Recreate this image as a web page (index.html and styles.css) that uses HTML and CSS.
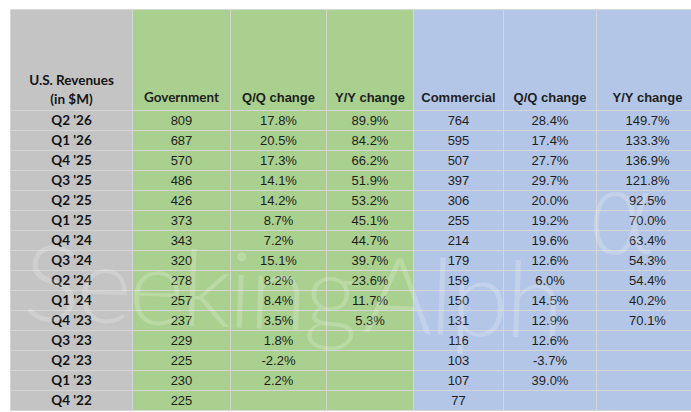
FILE: index.html
```
<!DOCTYPE html>
<html>
<head>
<meta charset="utf-8">
<link rel="stylesheet" href="styles.css">
</head>
<body>
<div class="sheet">
<table class="rev">
<colgroup>
<col class="c-q"><col class="c-gov"><col class="c-gqq"><col class="c-gyy"><col class="c-com"><col class="c-cqq"><col class="c-cyy">
</colgroup>
<thead>
<tr>
<th class="lbl">U.S. Revenues<br>(in $M)</th>
<th class="g cal">Government</th>
<th class="g">Q/Q change</th>
<th class="g">Y/Y change</th>
<th class="b">Commercial</th>
<th class="b">Q/Q change</th>
<th class="b">Y/Y change</th>
</tr>
</thead>
<tbody>
<tr><td class="lbl">Q2 '26</td><td class="g">809</td><td class="g">17.8%</td><td class="g">89.9%</td><td class="b">764</td><td class="b">28.4%</td><td class="b">149.7%</td></tr>
<tr><td class="lbl">Q1 '26</td><td class="g">687</td><td class="g">20.5%</td><td class="g">84.2%</td><td class="b">595</td><td class="b">17.4%</td><td class="b">133.3%</td></tr>
<tr><td class="lbl">Q4 '25</td><td class="g">570</td><td class="g">17.3%</td><td class="g">66.2%</td><td class="b">507</td><td class="b">27.7%</td><td class="b">136.9%</td></tr>
<tr><td class="lbl">Q3 '25</td><td class="g">486</td><td class="g">14.1%</td><td class="g">51.9%</td><td class="b">397</td><td class="b">29.7%</td><td class="b">121.8%</td></tr>
<tr><td class="lbl">Q2 '25</td><td class="g">426</td><td class="g">14.2%</td><td class="g">53.2%</td><td class="b">306</td><td class="b">20.0%</td><td class="b">92.5%</td></tr>
<tr><td class="lbl">Q1 '25</td><td class="g">373</td><td class="g">8.7%</td><td class="g">45.1%</td><td class="b">255</td><td class="b">19.2%</td><td class="b">70.0%</td></tr>
<tr><td class="lbl">Q4 '24</td><td class="g">343</td><td class="g">7.2%</td><td class="g">44.7%</td><td class="b">214</td><td class="b">19.6%</td><td class="b">63.4%</td></tr>
<tr><td class="lbl">Q3 '24</td><td class="g">320</td><td class="g">15.1%</td><td class="g">39.7%</td><td class="b">179</td><td class="b">12.6%</td><td class="b">54.3%</td></tr>
<tr><td class="lbl">Q2 '24</td><td class="g">278</td><td class="g">8.2%</td><td class="g">23.6%</td><td class="b">159</td><td class="b">6.0%</td><td class="b">54.4%</td></tr>
<tr><td class="lbl">Q1 '24</td><td class="g">257</td><td class="g">8.4%</td><td class="g">11.7%</td><td class="b">150</td><td class="b">14.5%</td><td class="b">40.2%</td></tr>
<tr><td class="lbl">Q4 '23</td><td class="g">237</td><td class="g">3.5%</td><td class="g">5.3%</td><td class="b">131</td><td class="b">12.9%</td><td class="b">70.1%</td></tr>
<tr><td class="lbl">Q3 '23</td><td class="g">229</td><td class="g">1.8%</td><td class="g"></td><td class="b">116</td><td class="b">12.6%</td><td class="b"></td></tr>
<tr><td class="lbl">Q2 '23</td><td class="g">225</td><td class="g">-2.2%</td><td class="g"></td><td class="b">103</td><td class="b">-3.7%</td><td class="b"></td></tr>
<tr><td class="lbl">Q1 '23</td><td class="g">230</td><td class="g">2.2%</td><td class="g"></td><td class="b">107</td><td class="b">39.0%</td><td class="b"></td></tr>
<tr><td class="lbl">Q4 '22</td><td class="g">225</td><td class="g"></td><td class="g"></td><td class="b">77</td><td class="b"></td><td class="b"></td></tr>
</tbody>
</table>
<div class="watermark" aria-hidden="true">Seeking Alph</div>
<div class="wm-alpha" aria-hidden="true">α</div>
</div>
</body>
</html>
```
FILE: styles.css
```
html, body {
  margin: 0;
  padding: 0;
  background: #ffffff;
  overflow: hidden;
}
body {
  width: 691px;
  height: 412px;
}
.sheet {
  position: relative;
  padding: 9px 0 0 10px;
  width: 681px;
  height: 403px;
  overflow: hidden;
}
.rev {
  border-collapse: collapse;
  table-layout: fixed;
  width: 688px;
  font-family: "Liberation Sans", Arial, sans-serif;
  font-size: 13px;
  color: #1e1e1e;
}
.c-q { width: 122px; }
.c-gov { width: 98px; }
.c-gqq { width: 96px; }
.c-gyy { width: 87px; }
.c-com { width: 90px; }
.c-cqq { width: 93px; }
.c-cyy { width: 102px; }
.rev th, .rev td {
  border: 1px solid #d6d6d6;
  padding: 0;
  text-align: center;
  white-space: nowrap;
}
.rev thead th {
  height: 97px;
  vertical-align: bottom;
  padding-bottom: 3px;
  font-weight: bold;
  line-height: 19px;
}
.rev tbody td {
  height: 19px;
  line-height: 19px;
}
.lbl {
  background: #c4c4c4;
  font-family: "Lato", "Open Sans", sans-serif;
  font-weight: bold;
  font-size: 13.5px;
  color: #141414;
}
.cal {
  font-family: "Lato", "Open Sans", sans-serif;
  font-size: 13.5px;
}
.g { background: #a9d08e; }
.b { background: #b4c6e7; }
.rev thead .lbl {
  padding-bottom: 1px;
}
.watermark {
  position: absolute;
  left: 22px;
  top: 226px;
  font-family: "Lato", "Open Sans", sans-serif;
  font-weight: 300;
  font-size: 106px;
  letter-spacing: -3px;
  word-spacing: -14px;
  line-height: 1;
  color: rgba(255, 255, 255, 0.2);
  white-space: nowrap;
  pointer-events: none;
  transform: rotate(2deg);
  transform-origin: 0 100%;
}
.wm-alpha {
  position: absolute;
  left: 585px;
  top: 160px;
  font-family: "DejaVu Sans", sans-serif;
  font-weight: 200;
  font-size: 110px;
  line-height: 1;
  color: rgba(255, 255, 255, 0.2);
  pointer-events: none;
}
```
